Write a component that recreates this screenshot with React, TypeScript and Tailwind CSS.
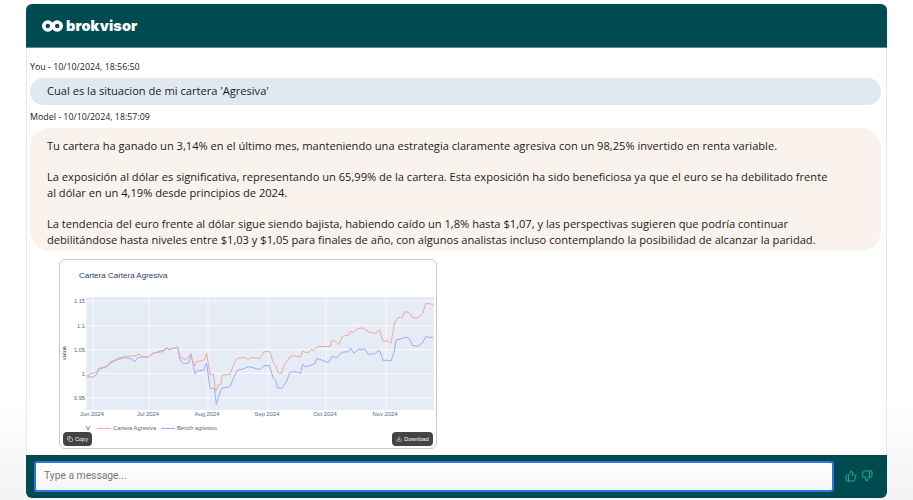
import { Copy, Download, ThumbsDown, ThumbsUp } from 'lucide-react';

type Pt = [number, number];

// points traced from two halves of the plot, each with its own x origin
const left = (pts: Pt[]) => pts.map(([x, y]) => `${85 + x / 3},${295 + y / 3}`);
const right = (pts: Pt[]) => pts.map(([x, y]) => `${260 + x / 3},${295 + y / 3}`);

const redLine = [
  ...left([[10, 238], [8, 243], [15, 236], [35, 232], [42, 220], [65, 214], [75, 202], [95, 192], [115, 185], [135, 183], [150, 183], [162, 178], [175, 186], [190, 186], [205, 174], [235, 170], [243, 158], [252, 165], [278, 155], [285, 185], [295, 192], [305, 192], [318, 175], [322, 195], [330, 212], [335, 200], [358, 195], [365, 175], [375, 238], [385, 238], [392, 288], [400, 270], [408, 268], [412, 240], [435, 238], [450, 200], [458, 190], [475, 187], [490, 193], [500, 188], [525, 190]]),
  ...right([[12, 170], [30, 170], [40, 205], [48, 212], [55, 235], [65, 235], [72, 212], [90, 185], [105, 182], [122, 187], [128, 168], [135, 172], [145, 172], [155, 163], [162, 167], [172, 155], [210, 154], [215, 138], [225, 138], [237, 148], [245, 128], [255, 122], [267, 120], [272, 108], [280, 113], [293, 100], [310, 99], [325, 110], [345, 116], [358, 105], [370, 140], [375, 138], [385, 138], [393, 145], [403, 85], [415, 68], [428, 66], [433, 50], [447, 52], [458, 68], [475, 68], [488, 55], [497, 26], [510, 26], [520, 30]]),
].join(' ');

const blueLine = [
  ...left([[10, 241], [8, 246], [25, 246], [35, 238], [42, 222], [65, 216], [75, 205], [95, 195], [115, 188], [135, 190], [150, 200], [158, 188], [175, 186], [190, 187], [205, 175], [225, 168], [240, 165], [244, 158], [252, 163], [278, 157], [285, 195], [295, 205], [310, 205], [318, 180], [330, 236], [335, 228], [355, 226], [365, 205], [375, 280], [388, 280], [394, 328], [402, 300], [410, 280], [435, 275], [445, 250], [458, 225], [475, 222], [490, 215], [500, 217], [525, 224]]),
  ...right([[12, 212], [28, 212], [40, 250], [48, 258], [52, 278], [65, 280], [80, 258], [90, 232], [105, 230], [122, 235], [128, 208], [135, 215], [150, 212], [165, 205], [170, 190], [190, 197], [205, 203], [215, 185], [232, 187], [245, 172], [265, 170], [272, 160], [282, 175], [295, 163], [315, 163], [325, 178], [345, 176], [358, 165], [370, 198], [378, 195], [393, 198], [403, 170], [408, 135], [428, 130], [437, 126], [447, 130], [458, 152], [475, 153], [488, 143], [497, 125], [520, 128]]),
].join(' ');

const yTicks = [
  { y: 301, label: '1.15' },
  { y: 325.5, label: '1.1' },
  { y: 349.5, label: '1.05' },
  { y: 373.5, label: '1' },
  { y: 398, label: '0.95' },
];

const xTicks = [
  { x: 93, label: 'Jun 2024' },
  { x: 149, label: 'Jul 2024' },
  { x: 208, label: 'Aug 2024' },
  { x: 268, label: 'Sep 2024' },
  { x: 326, label: 'Oct 2024' },
  { x: 386, label: 'Nov 2024' },
];

const Chart = () => (
  <svg viewBox="60 260 376 188" className="block w-[376px] h-[188px]" fontFamily="'Liberation Sans', sans-serif">
    <text x="79" y="278" fontSize="8" fill="#2a3f5f">Cartera Cartera Agresiva</text>
    <rect x="86" y="297" width="348" height="113" fill="#e5ecf6" />
    {yTicks.map((t) => (
      <g key={t.label}>
        <line x1="86" x2="434" y1={t.y} y2={t.y} stroke="#fff" strokeWidth="0.8" />
        <text x="85" y={t.y + 2} fontSize="5.7" fill="#506784" textAnchor="end">{t.label}</text>
      </g>
    ))}
    {xTicks.map((t) => (
      <g key={t.label}>
        <line x1={t.x} x2={t.x} y1="297" y2="410" stroke="#fff" strokeWidth="0.8" />
        <text x={t.x - 1} y="416" fontSize="5.8" fill="#506784" textAnchor="middle">{t.label}</text>
      </g>
    ))}
    <text transform="translate(66 353) rotate(-90)" fontSize="6" fill="#2a3f5f" textAnchor="middle">value</text>
    <polyline points={blueLine} fill="none" stroke="#a3a8fb" strokeWidth="1" strokeLinejoin="round" />
    <polyline points={redLine} fill="none" stroke="#f1a89b" strokeWidth="1" strokeLinejoin="round" />
    <text x="86" y="430" fontSize="6" fill="#2a3f5f">V</text>
    <line x1="97" x2="111" y1="428.5" y2="428.5" stroke="#f1a89b" />
    <text x="113" y="430" fontSize="5.8" fill="#506784">Cartera Agresiva</text>
    <line x1="161" x2="175" y1="428.5" y2="428.5" stroke="#a3a8fb" />
    <text x="177" y="430" fontSize="5.8" fill="#506784">Bench agresivo</text>
  </svg>
);

const Logo = () => (
  <svg width="21" height="12" viewBox="0 0 21 12" fill="none" stroke="#fff" strokeWidth="3.6">
    <circle cx="5.8" cy="6" r="4" />
    <circle cx="15.2" cy="6" r="4" />
  </svg>
);

const App = () => {
  return (
    <div className="h-[500px] w-[913px] overflow-hidden bg-gradient-to-b from-white from-80% to-[#f3f3f3] px-[26px] pt-1 font-['Open_Sans',sans-serif] text-[#1a1a1a]">
      <div className="flex h-[44px] items-center gap-[3px] rounded-t-md border-b border-[#5d8a8e] bg-[#004a52] pl-[16px] pt-px">
        <Logo />
        <span className="font-['Inter',sans-serif] text-[14.5px] font-black tracking-[0.1px] text-white">brokvisor</span>
      </div>

      <div className="h-[407px] overflow-hidden border-x border-[#e8e8e8] bg-white pl-[3px] pr-[5px]">
        <p className="mt-[13px] text-[8.85px] leading-[12px]">You - 10/10/2024, 18:56:50</p>
        <div className="mt-[5px] flex h-[27px] items-center rounded-[14px] bg-[#e0e9f2] pl-[17px] text-[11.12px]">
          Cual es la situacion de mi cartera 'Agresiva'
        </div>
        <p className="mt-[6px] text-[8.85px] leading-[12px]">Model - 10/10/2024, 18:57:09</p>
        <div className="mt-[5px] h-[123px] whitespace-nowrap rounded-[20px] bg-[#faf3ed] pl-[17px] pt-[10px] text-[11.12px] leading-[16px]">
          Tu cartera ha ganado un 3,14% en el último mes, manteniendo una estrategia claramente agresiva con un 98,25% invertido en renta variable.
          <div className="mt-[15px]">
            La exposición al dólar es significativa, representando un 65,99% de la cartera. Esta exposición ha sido beneficiosa ya que el euro se ha debilitado frente
            <br />
            al dólar en un 4,19% desde principios de 2024.
          </div>
          <div className="mt-[15px]">
            La tendencia del euro frente al dólar sigue siendo bajista, habiendo caído un 1,8% hasta $1,07, y las perspectivas sugieren que podría continuar
            <br />
            debilitándose hasta niveles entre $1,03 y $1,05 para finales de año, con algunos analistas incluso contemplando la posibilidad de alcanzar la paridad.
          </div>
        </div>

        <div className="relative ml-[29px] mt-[8px] w-[378px] rounded-md border border-[#c8c8c8] bg-white">
          <Chart />
          <button className="absolute bottom-[2px] left-[3px] flex h-[14px] w-[29px] items-center justify-center gap-[2px] rounded-sm bg-[#444] font-['Liberation_Sans',sans-serif] text-[5.5px] text-white">
            <Copy size={6} />
            Copy
          </button>
          <button className="absolute bottom-[2px] right-[3px] flex h-[14px] w-[41px] items-center justify-center gap-[2px] rounded-sm bg-[#444] font-['Liberation_Sans',sans-serif] text-[5.5px] text-white">
            <Download size={6} />
            Download
          </button>
        </div>
      </div>

      <div className="flex h-[43px] items-center rounded-b-md bg-[#004a52] pl-[8px] pb-px">
        <div className="flex h-[31px] w-[800px] items-center rounded-[3px] border-2 border-[#2f74e0] bg-gradient-to-b from-white to-[#f5f5f5] pl-[8px] font-['Roboto',sans-serif] text-[10.3px] text-[#777]">
          Type a message...
        </div>
        <ThumbsUp size={12} strokeWidth={2} className="ml-[11px] text-[#17b083]" />
        <ThumbsDown size={12} strokeWidth={2} className="ml-[4px] text-[#17b083]" />
      </div>
    </div>
  );
};

export default App;
